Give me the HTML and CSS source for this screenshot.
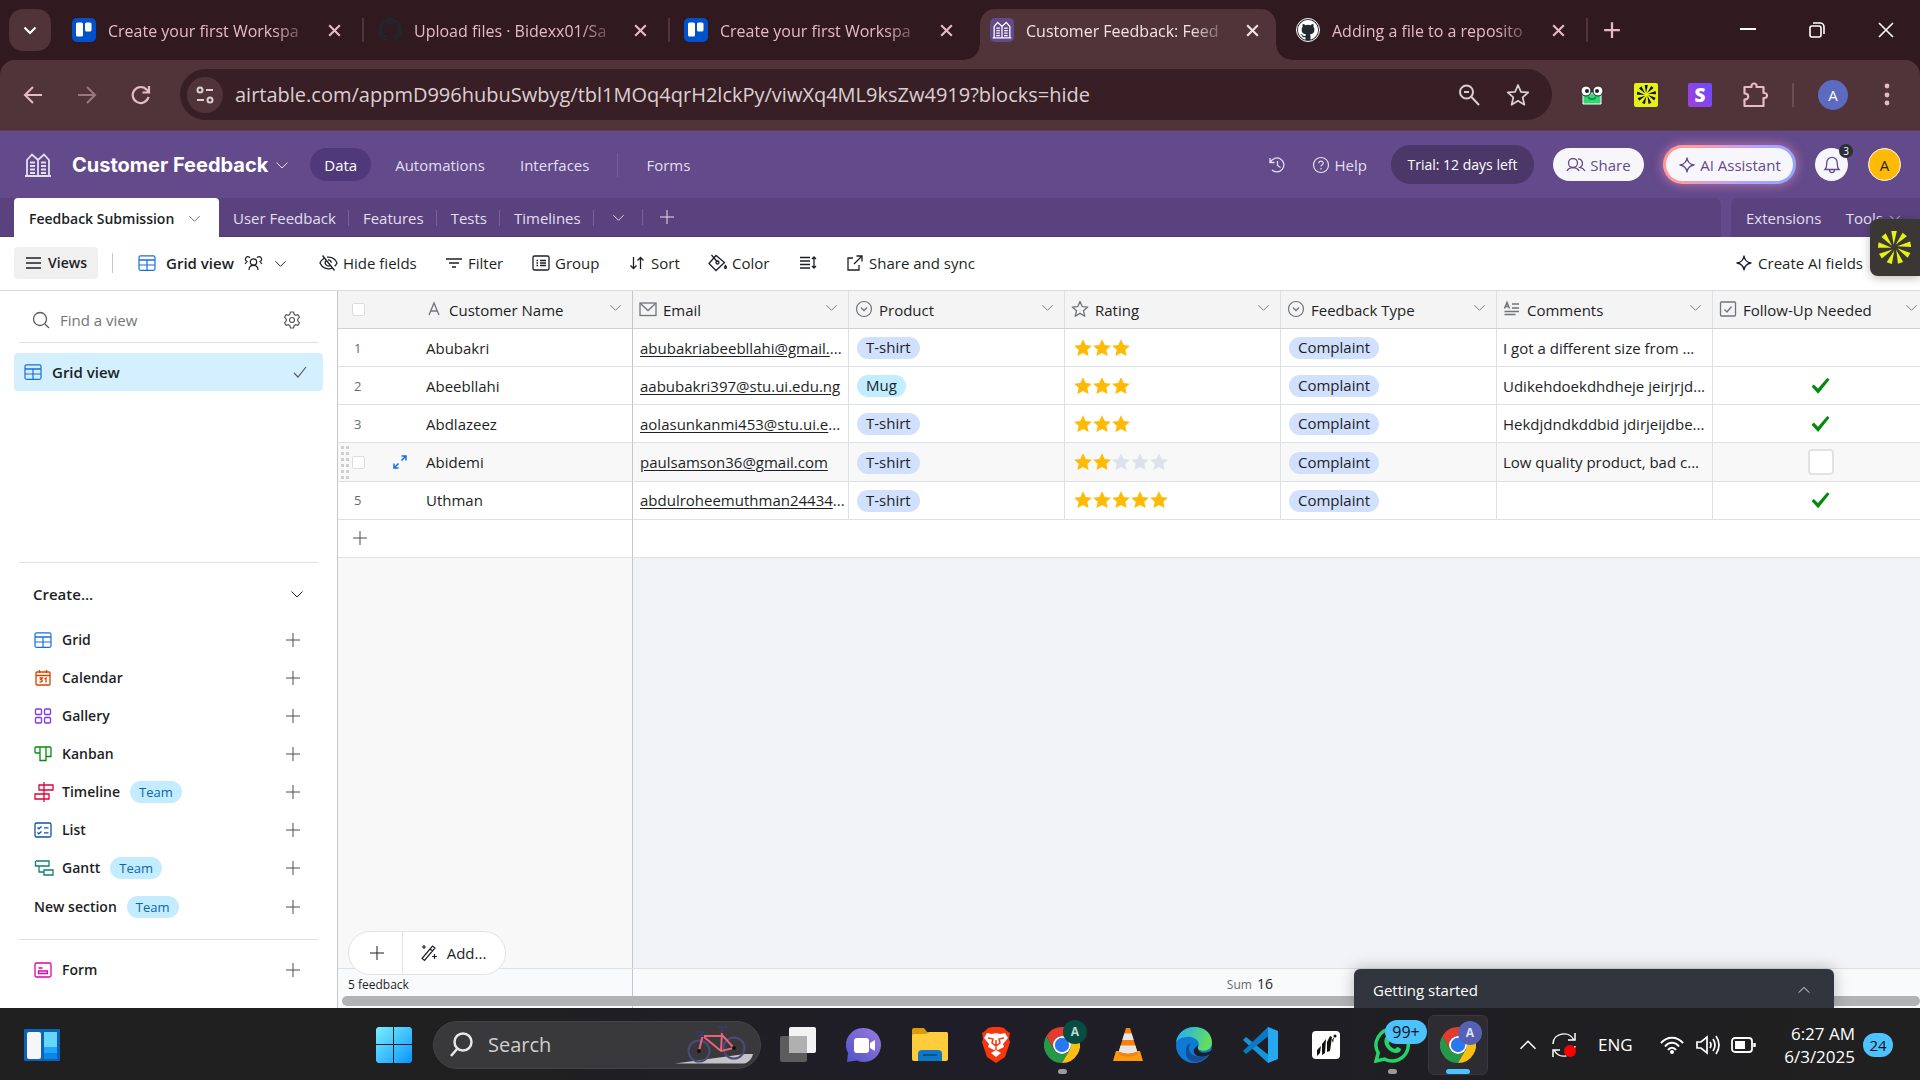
FILE: index.html
```html
<!DOCTYPE html>
<html lang="en">
<head>
<meta charset="utf-8">
<title>Customer Feedback: Feedback Submission</title>
<link rel="stylesheet" href="styles.css">
</head>
<body>
<svg class="sprite" aria-hidden="true">
  <symbol id="chev" viewBox="0 0 16 16"><path d="M2.500 5.500 8 11l5.500-5.500" fill="none" stroke="currentColor"/></symbol>
  <symbol id="chev-up" viewBox="0 0 16 16"><path d="M2 11 8 5l6 6" fill="none" stroke="currentColor"/></symbol>
  <symbol id="x" viewBox="0 0 16 16"><path d="m3 3 10 10M13 3 3 13" fill="none" stroke="currentColor"/></symbol>
  <symbol id="plus" viewBox="0 0 16 16"><path d="M8 1v14M1 8h14" fill="none" stroke="currentColor"/></symbol>
  <symbol id="trello" viewBox="0 0 24 24"><rect width="24" height="24" rx="5" fill="#0052cc"/><rect x="4" y="4.500" width="7" height="14" rx="1.500" fill="#fff"/><rect x="13" y="4.500" width="6.500" height="9" rx="1.500" fill="#fff"/></symbol>
  <symbol id="github" viewBox="0 0 16 16"><path fill="currentColor" d="M8 0C3.580 0 0 3.580 0 8c0 3.540 2.290 6.530 5.470 7.590.4.070.55-.17.55-.38 0-.19-.01-.82-.01-1.490-2.010.37-2.530-.49-2.690-.94-.09-.23-.48-.94-.82-1.130-.28-.15-.68-.52-.01-.53.63-.01 1.080.58 1.230.82.72 1.210 1.870.87 2.330.66.07-.52.28-.87.51-1.070-1.780-.2-3.640-.89-3.640-3.950 0-.87.31-1.590.82-2.150-.08-.2-.36-1.020.08-2.120 0 0 .67-.21 2.200.82a7.600 7.600 0 0 1 4 0c1.530-1.040 2.200-.82 2.200-.82.44 1.100.16 1.920.08 2.120.51.56.82 1.270.82 2.150 0 3.070-1.870 3.750-3.650 3.950.29.25.54.73.54 1.480 0 1.070-.01 1.930-.01 2.200 0 .21.15.46.55.38A8 8 0 0 0 8 0Z"/></symbol>
  <symbol id="base" viewBox="0 0 28 24"><path d="M1 23h26M3 23V7l5-5.500L14 7l6-5.500L25 7v16M14 7v16M6 9.500h5M6 13h5M6 16.500h5M6 20h5M17 9.500h5M17 13h5M17 16.500h5M17 20h5" fill="none" stroke="currentColor" stroke-width="1.800"/></symbol>
  <symbol id="grid" viewBox="0 0 18 18"><path d="M1 6h16" stroke="currentColor" stroke-width="1.500"/><path d="M2.500 1.800h13A1.500 1.500 0 0 1 17 3v12a1.500 1.500 0 0 1-1.500 1.300h-13A1.500 1.500 0 0 1 1 15V3a1.500 1.500 0 0 1 1.500-1.200ZM1 11h16M9 6v10" fill="none" stroke="currentColor" stroke-width="1.200"/></symbol>
  <symbol id="star" viewBox="0 0 16 16"><path d="m8 .3 2.400 5 5.500.6-4.100 3.700 1.200 5.600L8 12.500l-5 2.700 1.200-5.600L.1 5.900l5.500-.6z" fill="currentColor"/></symbol>
  <symbol id="star-o" viewBox="0 0 18 18"><path d="m9 1.500 2.200 5.100 5.500.5-4.200 3.700 1.300 5.500L9 13.400l-4.800 2.900 1.300-5.500L1.300 7.100l5.500-.5z" fill="none" stroke="currentColor" stroke-width="1.300" stroke-linejoin="round"/></symbol>
  <symbol id="select" viewBox="0 0 18 18"><circle cx="9" cy="9" r="7.500" fill="none" stroke="currentColor" stroke-width="1.200"/><path d="m6 7.500 3 3 3-3" fill="none" stroke="currentColor" stroke-width="1.300"/></symbol>
  <symbol id="sparkle" viewBox="0 0 18 18"><path d="M9 2c.7 4.500 2.500 6.300 7 7-4.500.7-6.300 2.500-7 7-.7-4.500-2.500-6.300-7-7 4.500-.7 6.300-2.500 7-7Z" fill="none" stroke="currentColor" stroke-width="1.300" stroke-linejoin="round"/></symbol>
  <symbol id="burst" viewBox="-12 -12 24 24"><g fill="currentColor"><path d="M-.6-2-2.300-12h4z"/><path d="M-.6-2-2.300-12h4z" transform="rotate(40)"/><path d="M-.6-2-2.300-12h4z" transform="rotate(80)"/><path d="M-.6-2-2.300-12h4z" transform="rotate(120)"/><path d="M-.6-2-2.300-12h4z" transform="rotate(160)"/><path d="M-.6-2-2.300-12h4z" transform="rotate(200)"/><path d="M-.6-2-2.300-12h4z" transform="rotate(240)"/><path d="M-.6-2-2.300-12h4z" transform="rotate(280)"/><path d="M-.6-2-2.300-12h4z" transform="rotate(320)"/></g></symbol>
  <symbol id="chrome" viewBox="-18 -18 36 36"><path d="M-15.600-9A18 18 0 0 1 15.600-9L0-9A9 9 0 0 0-7.800 4.500Z" fill="#e33b2e"/><path d="M-15.600-9A18 18 0 0 0 0 18L7.800 4.500A9 9 0 0 1-7.800 4.500Z" fill="#279847"/><path d="M15.600-9A18 18 0 0 1 0 18L7.800 4.500A9 9 0 0 0 0-9Z" fill="#fbbf14"/><circle r="9" fill="#fff"/><circle r="7.200" fill="#2a78f0"/></symbol>
</svg>

<header class="browser">
  <div class="strip">
    <button class="tab-search" aria-label="Search tabs"><svg width="16" height="16" stroke-width="2"><use href="#chev"/></svg></button>
    <div class="btab"><svg width="24" height="24"><use href="#trello"/></svg><span class="btitle">Create your first Workspa</span><button class="close" aria-label="Close tab"><svg width="17" height="17"><use href="#x"/></svg></button></div>
    <div class="btab"><svg class="dark" width="24" height="24"><use href="#github"/></svg><span class="btitle">Upload files · Bidexx01/Sa</span><button class="close" aria-label="Close tab"><svg width="17" height="17"><use href="#x"/></svg></button></div>
    <div class="btab no-sep"><svg width="24" height="24"><use href="#trello"/></svg><span class="btitle">Create your first Workspa</span><button class="close" aria-label="Close tab"><svg width="17" height="17"><use href="#x"/></svg></button></div>
    <div class="btab current"><span class="fav"><svg width="20" height="18"><use href="#base"/></svg></span><span class="btitle">Customer Feedback: Feed</span><button class="close" aria-label="Close tab"><svg width="17" height="17"><use href="#x"/></svg></button></div>
    <div class="btab"><span class="gh"><svg width="24" height="24"><use href="#github"/></svg></span><span class="btitle">Adding a file to a reposito</span><button class="close" aria-label="Close tab"><svg width="17" height="17"><use href="#x"/></svg></button></div>
    <button class="new-tab" aria-label="New tab"><svg width="18" height="18" stroke-width="2"><use href="#plus"/></svg></button>
    <div class="win">
      <button aria-label="Minimize"><svg width="16" height="16"><path d="M0 7h16" stroke="currentColor" stroke-width="2"/></svg></button>
      <button aria-label="Restore"><svg width="16" height="16" fill="none" stroke="currentColor" stroke-width="1.600"><rect x="1" y="4" width="11" height="11" rx="2"/><path d="M4 1h7a4 4 0 0 1 4 4v7"/></svg></button>
      <button aria-label="Close window"><svg width="16" height="16"><path d="m1 1 14 14M15 1 1 15" stroke="currentColor" stroke-width="1.600"/></svg></button>
    </div>
  </div>
  <div class="urlrow">
    <div class="nav">
      <button aria-label="Back"><svg width="20" height="20" fill="none" stroke="currentColor" stroke-width="2"><path d="M19 10H2M10 2l-8 8 8 8"/></svg></button>
      <button class="off" aria-label="Forward"><svg width="20" height="20" fill="none" stroke="currentColor" stroke-width="2"><path d="M1 10h17M10 2l8 8-8 8"/></svg></button>
      <button aria-label="Reload"><svg width="20" height="20" fill="none" stroke="currentColor" stroke-width="2.200"><path d="M17.500 12A8 8 0 1 1 16 5l2 2M18 1v6.500h-6.500"/></svg></button>
    </div>
    <div class="omni">
      <button class="site" aria-label="Site information"><svg width="20" height="20" fill="none" stroke="currentColor" stroke-width="2"><circle cx="5" cy="5" r="2.500"/><path d="M11 5h7M2 15h7"/><circle cx="15" cy="15" r="2.500"/></svg></button>
      <input class="url" type="text" aria-label="Address" value="airtable.com/appmD996hubuSwbyg/tbl1MOq4qrH2lckPy/viwXq4ML9ksZw4919?blocks=hide">
      <button aria-label="Zoom"><svg width="22" height="22" fill="none" stroke="currentColor" stroke-width="2"><circle cx="8.500" cy="8" r="6.500"/><path d="m13.500 13 7.500 8M6 8h5"/></svg></button>
      <button aria-label="Bookmark"><svg width="24" height="24"><use href="#star-o"/></svg></button>
    </div>
    <div class="ext">
      <button aria-label="Frog extension"><svg width="24" height="20"><path d="M3 8h18v11H3z" fill="#2fd873" stroke="#fff"/><path d="M8 12c2 3 6 3 8 0" fill="none" stroke="#184" stroke-width="1.500"/><circle cx="6" cy="6" r="5" fill="#fff" stroke="#222"/><circle cx="18" cy="6" r="5" fill="#fff" stroke="#222"/><circle cx="7" cy="6" r="2" fill="#222"/><circle cx="17" cy="6" r="2" fill="#222"/></svg></button>
      <button class="burst-btn" aria-label="Burst extension"><svg width="19" height="19"><use href="#burst"/></svg></button>
      <button class="s-btn" aria-label="S extension">S</button>
      <button aria-label="Extensions menu"><svg width="26" height="26" fill="none" stroke="currentColor" stroke-width="2.200"><path d="M2.500 5H9.500V4a2.500 2.500 0 0 1 5 0v1h7v6h1a2.500 2.500 0 0 1 0 5h-1v8h-19v-6.500c5 0 5-6 0-6z" stroke-linejoin="round"/></svg></button>
      <span class="bar"></span>
      <button class="profile" aria-label="Profile">A</button>
      <button aria-label="Chrome menu"><svg width="6" height="24" fill="currentColor"><circle cx="3" cy="3" r="2.400"/><circle cx="3" cy="12" r="2.400"/><circle cx="3" cy="20" r="2.400"/></svg></button>
    </div>
  </div>
</header>

<div class="apphead">
  <svg class="logo" width="28" height="24"><use href="#base"/></svg>
  <h1>Customer Feedback</h1>
  <svg class="chv" width="16" height="16"><use href="#chev"/></svg>
  <nav class="mainnav">
    <a class="on" href="#data">Data</a><a href="#auto">Automations</a><a href="#int">Interfaces</a><span class="bar"></span><a href="#forms">Forms</a>
  </nav>
  <div class="actions">
    <button class="history" aria-label="History"><svg width="18" height="18" fill="none" stroke="currentColor" stroke-width="1.300"><path d="M2.500 6A7 7 0 1 1 4 14M2 2v4.500h4.500M9.500 5v4.500l3 2"/></svg></button>
    <button class="help"><svg width="18" height="18" fill="none" stroke="currentColor" stroke-width="1.200"><circle cx="9" cy="9" r="7.500"/><path d="M6.800 7.200c0-3 4.600-2.700 4.400 0-.1 1.500-2.200 1.500-2.200 3.300M9 12v1.500"/></svg>Help</button>
    <button class="trial">Trial: 12 days left</button>
    <button class="pill share"><svg width="20" height="18" fill="none" stroke="currentColor" stroke-width="1.300"><circle cx="7" cy="7" r="4.500"/><path d="M1 15c2-4.500 10-4.500 12 0M12 2.800a4.500 4.500 0 0 1 2 8.500c2 .4 4 1.700 5 3.700"/></svg>Share</button>
    <button class="pill ai"><svg width="18" height="18"><use href="#sparkle"/></svg>AI Assistant</button>
    <button class="bell" aria-label="Notifications"><svg width="18" height="20" fill="none" stroke="currentColor" stroke-width="1.300"><path d="M2 14.500c2-2 1.500-4 1.800-7a5.200 5.200 0 0 1 10.400 0c.3 3-.2 5 1.800 7zM6.500 15c.5 3.500 4.500 3.500 5 0"/></svg><span class="count">3</span></button>
    <button class="me" aria-label="Account">A</button>
  </div>
</div>

<div class="tables">
  <div class="tabs">
    <a class="ttab active" href="#fs">Feedback Submission<svg width="15" height="15"><use href="#chev"/></svg></a>
    <a class="ttab" href="#uf">User Feedback</a><a class="ttab" href="#f">Features</a><a class="ttab" href="#t">Tests</a><a class="ttab" href="#tl">Timelines</a>
    <button class="more" aria-label="More tables"><svg width="15" height="15"><use href="#chev"/></svg></button>
    <button class="addt" aria-label="Add table"><svg width="16" height="16"><use href="#plus"/></svg></button>
  </div>
  <div class="side-tabs"><button>Extensions</button><button>Tools<svg width="14" height="14"><use href="#chev"/></svg></button></div>
  <button class="float" aria-label="Open assistant"><svg width="33" height="33"><use href="#burst"/></svg></button>
</div>

<div class="viewbar">
  <button class="views"><svg width="17" height="14" stroke="currentColor" stroke-width="1.400"><path d="M1 2h15M1 7h15M1 12h15"/></svg>Views</button>
  <span class="bar"></span>
  <button class="gridview"><svg class="blue" width="18" height="18"><use href="#grid"/></svg><span>Grid view</span><svg width="19" height="18" fill="none" stroke="currentColor" stroke-width="1.200"><circle cx="9.500" cy="8" r="3.200"/><path d="M5 16c0-6.300 9-6.300 9 0M6 3.800A2.500 2.500 0 1 0 3 7.500L1 10M13 3.800a2.500 2.500 0 1 1 3 3.700l2 2.500"/></svg><svg width="15" height="15"><use href="#chev"/></svg></button>
  <button class="tool t1"><svg width="19" height="18" fill="none" stroke="currentColor" stroke-width="1.300"><path d="m3.500 1.500 12 15M5.500 4C3 5.500 1.500 7.500 1 9c2 5 7.500 7 12.500 5M8 3.200c5-.6 8.500 2.300 10 5.800-.5 1-1.300 2.300-2.300 3.200M6.800 6.800a3.300 3.300 0 0 0 4.400 4.700M9 5.800a3.300 3.300 0 0 1 3.300 3"/></svg>Hide fields</button>
  <button class="tool t2"><svg width="18" height="18" fill="none" stroke="currentColor" stroke-width="1.400"><path d="M1 5h16M4 9h10M7 13h4"/></svg>Filter</button>
  <button class="tool t3"><svg width="18" height="18" fill="none" stroke="currentColor" stroke-width="1.300"><rect x="1" y="2" width="16" height="14" rx="1.500"/><path d="M4.500 6.500H6M4.500 9H6M4.500 11.500H6M8 6.500h6M8 9h6M8 11.500h6"/></svg>Group</button>
  <button class="tool t4"><svg width="16" height="18" fill="none" stroke="currentColor" stroke-width="1.300"><path d="M4.500 3v11M1.500 11.500l3 3 3-3M11.500 15V4M8.500 6.500l3-3 3 3"/></svg>Sort</button>
  <button class="tool t5"><svg width="20" height="18" fill="none" stroke="currentColor" stroke-width="1.300"><path d="M8 1.500 1 9.500l7 7 8.500-8zM3.500 1l6 7"/><circle cx="9.500" cy="8.500" r="1.500"/><path d="M17.500 11.500c3 4-3 4 0 0Z"/></svg>Color</button>
  <button class="tool t6" aria-label="Row height"><svg width="18" height="18" fill="none" stroke="currentColor" stroke-width="1.300"><path d="M1 3.500h10M1 7h10M1 10.500h10M1 14h10M15 3v11M13 5l2-2 2 2M13 12l2 2 2-2"/></svg></button>
  <button class="tool t7"><svg width="16" height="18" fill="none" stroke="currentColor" stroke-width="1.300"><path d="M6 4H1v12h11v-5M9.500 2H15v5.500M15 2 7 10"/></svg>Share and sync</button>
  <button class="tool aif"><svg width="18" height="18"><use href="#sparkle"/></svg>Create AI fields</button>
</div>

<main class="work">
  <aside class="sidebar">
    <div class="find">
      <svg width="18" height="18" fill="none" stroke="currentColor" stroke-width="1.300"><circle cx="8" cy="8" r="6.500"/><path d="m13 13 4 4"/></svg>
      <input type="text" placeholder="Find a view" aria-label="Find a view">
      <button aria-label="View settings"><svg width="18" height="18" fill="none" stroke="currentColor" stroke-width="1.200"><circle cx="9" cy="9" r="2.500"/><path d="M6.800 3.500 7.500 1h3l.7 2.500 1.300.8 2.500-.6 1.500 2.500-1.800 1.900v1.800l1.800 1.900-1.500 2.500-2.500-.6-1.300.8-.7 2.500h-3l-.7-2.500-1.300-.8-2.500.6-1.500-2.500 1.800-1.900V8.100L1.500 6.200 3 3.700l2.500.6z" stroke-linejoin="round"/></svg></button>
    </div>
    <a class="vrow" href="#grid-view"><svg class="blue" width="18" height="18"><use href="#grid"/></svg>Grid view<svg class="vcheck" width="14" height="14" fill="none" stroke="currentColor" stroke-width="1.200"><path d="m1 8 4 4 8-10"/></svg></a>
    <div class="create">
      <button class="chead">Create...<svg width="16" height="16"><use href="#chev"/></svg></button>
      <button class="crow"><svg class="blue" width="18" height="18"><use href="#grid"/></svg>Grid<svg class="plus" width="16" height="16"><use href="#plus"/></svg></button>
      <button class="crow"><svg width="18" height="18" fill="none" stroke="#d54401" stroke-width="1.300"><rect x="2" y="3" width="14" height="13" rx="1"/><path d="M2 6.500h14M5.500 1v3M12.500 1v3M5.500 9h2.800l-1.500 1.700c2.500 0 1.800 3-1.300 2.200M10.500 10l1.500-1v4.500"/></svg>Calendar<svg class="plus" width="16" height="16"><use href="#plus"/></svg></button>
      <button class="crow"><svg width="18" height="18" fill="none" stroke="#7c37ef" stroke-width="1.300"><rect x="1.500" y="2" width="6" height="5.500" rx="1"/><rect x="10.500" y="2" width="6" height="5.500" rx="1"/><rect x="1.500" y="10.500" width="6" height="5.500" rx="1"/><rect x="10.500" y="10.500" width="6" height="5.500" rx="1"/></svg>Gallery<svg class="plus" width="16" height="16"><use href="#plus"/></svg></button>
      <button class="crow"><svg width="18" height="18" fill="none" stroke="#048a0e" stroke-width="1.300"><path d="M2 2h14a1 1 0 0 1 1 1v8.500h-5M6 8H2a1 1 0 0 1-1-1V3a1 1 0 0 1 1-1M6 2v13.500h6V2"/></svg>Kanban<svg class="plus" width="16" height="16"><use href="#plus"/></svg></button>
      <button class="crow"><svg width="20" height="20" fill="none" stroke="#dc043b" stroke-width="1.300"><path d="M10 0v20M5 3h14v5H5zM1 12h14v5H1z"/></svg>Timeline<span class="team">Team</span><svg class="plus" width="16" height="16"><use href="#plus"/></svg></button>
      <button class="crow"><svg width="18" height="18" fill="none" stroke="#0d52ac" stroke-width="1.300"><rect x="1" y="2" width="16" height="14" rx="1.500"/><path d="m3.500 6.500 1.300 1.300L7.500 5.500M3.500 11.500l1.300 1.300 2.700-2.300M10 6.800h4.500M10 11.800h4.500"/></svg>List<svg class="plus" width="16" height="16"><use href="#plus"/></svg></button>
      <button class="crow"><svg width="20" height="18" fill="none" stroke="#0f7f78" stroke-width="1.300"><path d="M2 2h13v5H1.500V2M5 7v6h5M10 11h9v5h-9z"/></svg>Gantt<span class="team">Team</span><svg class="plus" width="16" height="16"><use href="#plus"/></svg></button>
      <button class="crow section">New section<span class="team">Team</span><svg class="plus" width="16" height="16"><use href="#plus"/></svg></button>
      <button class="crow form"><svg width="18" height="18" fill="none" stroke="#dd04a8" stroke-width="1.300"><rect x="1" y="2" width="16" height="14" rx="1.500"/><path d="M4.500 7h4M4.500 10h9v2.500h-9z"/></svg>Form<svg class="plus" width="16" height="16"><use href="#plus"/></svg></button>
    </div>
  </aside>

  <section class="gridpane">
    <table>
      <colgroup><col class="c-num"><col class="c"><col class="c"><col class="c"><col class="c"><col class="c"><col class="c"><col class="c"></colgroup>
      <thead><tr>
        <th class="num"><input type="checkbox" class="box" aria-label="Select all"></th>
        <th class="frozen"><div class="h"><svg width="18" height="18" fill="none" stroke="currentColor" stroke-width="1.300"><path d="m4 15 5-12 5 12M5.700 11h6.600"/></svg>Customer Name<svg class="hc" width="15" height="15"><use href="#chev"/></svg></div></th>
        <th><div class="h"><svg width="18" height="18" fill="none" stroke="currentColor" stroke-width="1.300"><rect x="1" y="3" width="16" height="12.500"/><path d="m1.500 3.500 7.500 7 7.500-7"/></svg>Email<svg class="hc" width="15" height="15"><use href="#chev"/></svg></div></th>
        <th><div class="h"><svg width="18" height="18"><use href="#select"/></svg>Product<svg class="hc" width="15" height="15"><use href="#chev"/></svg></div></th>
        <th><div class="h"><svg width="18" height="18"><use href="#star-o"/></svg>Rating<svg class="hc" width="15" height="15"><use href="#chev"/></svg></div></th>
        <th><div class="h"><svg width="18" height="18"><use href="#select"/></svg>Feedback Type<svg class="hc" width="15" height="15"><use href="#chev"/></svg></div></th>
        <th><div class="h"><svg width="18" height="18" fill="none" stroke="currentColor" stroke-width="1.500"><path d="m1.500 8.500 2.500-6 2.500 6M2.500 6.500h3M9 4h7M9 8h7M1.500 11.500H16M1.500 14.500h11"/></svg>Comments<svg class="hc" width="15" height="15"><use href="#chev"/></svg></div></th>
        <th><div class="h"><svg width="18" height="18" fill="none" stroke="currentColor" stroke-width="1.300"><rect x="1.500" y="2" width="15" height="14" rx="1"/><path d="m5.500 9.500 2.500 2.500 4.500-5.500"/></svg>Follow-Up Needed<svg class="hc" width="15" height="15"><use href="#chev"/></svg></div></th>
      </tr></thead>
      <tbody>
        <tr><td class="num">1</td><td class="frozen">Abubakri</td><td class="mail"><a href="#m1">abubakriabeebllahi@gmail.</a>...</td><td><span class="tag">T-shirt</span></td><td class="rate"><svg><use href="#star"/></svg><svg><use href="#star"/></svg><svg><use href="#star"/></svg></td><td><span class="tag">Complaint</span></td><td>I got a different size from ...</td><td class="fu"><input type="checkbox" aria-label="Follow-up for Abubakri"></td></tr>
        <tr><td class="num">2</td><td class="frozen">Abeebllahi</td><td class="mail"><a href="#m2">aabubakri397@stu.ui.edu.ng</a></td><td><span class="tag cyan">Mug</span></td><td class="rate"><svg><use href="#star"/></svg><svg><use href="#star"/></svg><svg><use href="#star"/></svg></td><td><span class="tag">Complaint</span></td><td>Udikehdoekdhdheje jeirjrjd...</td><td class="fu"><input type="checkbox" checked aria-label="Follow-up for Abeebllahi"></td></tr>
        <tr><td class="num">3</td><td class="frozen">Abdlazeez</td><td class="mail"><a href="#m3">aolasunkanmi453@stu.ui.e</a>...</td><td><span class="tag">T-shirt</span></td><td class="rate"><svg><use href="#star"/></svg><svg><use href="#star"/></svg><svg><use href="#star"/></svg></td><td><span class="tag">Complaint</span></td><td>Hekdjdndkddbid jdirjeijdbe...</td><td class="fu"><input type="checkbox" checked aria-label="Follow-up for Abdlazeez"></td></tr>
        <tr class="hover"><td class="num"><div class="rowctl"><svg width="8" height="36" fill="#cfcfcf"><path d="M0 2h3v3H0zM5 2h3v3H5zM0 8h3v3H0zM5 8h3v3H5zM0 14h3v3H0zM5 14h3v3H5zM0 20h3v3H0zM5 20h3v3H5zM0 26h3v3H0zM5 26h3v3H5zM0 32h3v3H0zM5 32h3v3H5z"/></svg><input type="checkbox" class="box" aria-label="Select row 4"><button class="expand" aria-label="Expand record"><svg width="14" height="14" fill="none" stroke="currentColor" stroke-width="1.500"><path d="M8.500 1H13v4.500M13 1 8.500 5.500M5.500 13H1V8.500M1 13l4.500-4.500"/></svg></button></div></td><td class="frozen">Abidemi</td><td class="mail"><a href="#m4">paulsamson36@gmail.com</a></td><td><span class="tag">T-shirt</span></td><td class="rate"><svg><use href="#star"/></svg><svg><use href="#star"/></svg><svg class="no"><use href="#star"/></svg><svg class="no"><use href="#star"/></svg><svg class="no"><use href="#star"/></svg></td><td><span class="tag">Complaint</span></td><td>Low quality product, bad c...</td><td class="fu"><input type="checkbox" aria-label="Follow-up for Abidemi"></td></tr>
        <tr><td class="num">5</td><td class="frozen">Uthman</td><td class="mail"><a href="#m5">abdulroheemuthman24434</a>...</td><td><span class="tag">T-shirt</span></td><td class="rate"><svg><use href="#star"/></svg><svg><use href="#star"/></svg><svg><use href="#star"/></svg><svg><use href="#star"/></svg><svg><use href="#star"/></svg></td><td><span class="tag">Complaint</span></td><td></td><td class="fu"><input type="checkbox" checked aria-label="Follow-up for Uthman"></td></tr>
        <tr class="addrow"><td class="num"><button aria-label="Add record"><svg width="16" height="16"><use href="#plus"/></svg></button></td><td class="frozen"></td><td colspan="6"></td></tr>
      </tbody>
    </table>
    <div class="filler"><div class="fleft"></div></div>
    <div class="addpill"><button aria-label="Add record"><svg width="16" height="16"><use href="#plus"/></svg></button><button class="addmore"><svg width="18" height="18" fill="none" stroke="currentColor" stroke-width="1.200"><path d="M2 14.500 12.500 2l2.500 2L4.500 16.500zM4 1v4M2 3h4M14.500 10v5M12 12.500h5M10 5l2.500 2"/></svg>Add...</button></div>
    <footer class="summary">
      <div class="sleft">5 feedback</div>
      <div class="sum">Sum <b>16</b></div>
      <div class="scroll"></div>
    </footer>
    <button class="getting">Getting started<svg width="14" height="14"><use href="#chev-up"/></svg></button>
  </section>
</main>

<footer class="taskbar">
  <button class="widgets" aria-label="Widgets"><svg width="36" height="32"><rect width="36" height="32" rx="1" fill="#0b62b8"/><rect x="3" y="3" width="14" height="27" rx="2" fill="#f6f6f6"/><path d="M20 3h13v15H20z" fill="#66d6ff"/><path d="M20 18h13v6H20z" fill="#1fa5fb"/><path d="M20 24h13v6H20z" fill="#0a86e8"/></svg></button>
  <div class="apps">
    <button class="start" aria-label="Start"><svg width="36" height="36"><defs><linearGradient id="w" x1="0" y1="0" x2="1" y2="1"><stop offset="0" stop-color="#79f0ff"/><stop offset="1" stop-color="#0a94ff"/></linearGradient></defs><path d="M2 0h15v17H0V2zM18 0h16l2 2v15H18zM0 18h17v18H2l-2-2zM18 18h18v16l-2 2H18z" fill="url(#w)"/></svg></button>
    <label class="search"><svg width="24" height="26" fill="none" stroke="#e8e8e8" stroke-width="2.500"><circle cx="13" cy="10" r="8.500"/><path d="m7 17-6 7"/></svg><input type="text" placeholder="Search" aria-label="Search"><svg width="80" height="40" fill="none"><path d="M0 38.500 70 29h8c-1 5-5 9-9 9.500z" fill="#c4c4c6"/><circle cx="24" cy="26" r="10.500" stroke="#4b4a7c" stroke-width="2"/><circle cx="59" cy="23" r="10.500" stroke="#4b4a7c" stroke-width="2"/><path d="m24 26 4-17M29 12l17 14 13-3L48 11H29M46 26l1-19" stroke="#e5647c" stroke-width="2"/><path d="M20 7h8v4h-6M43 2h9M47 2v6" stroke="#3a3960" stroke-width="2"/><circle cx="24" cy="26" r="2" fill="#111"/><circle cx="59" cy="23" r="2" fill="#111"/></svg></label>
    <button class="app" aria-label="Task view"><svg width="36" height="36"><rect x="0" y="9" width="27" height="26" rx="2" fill="#5c5c5c"/><rect x="9" width="27" height="26" rx="2" fill="#f3f3f3"/><path d="M9 9h18v17H9z" fill="#b0b0b0"/></svg></button>
    <button class="app" aria-label="Chat"><svg width="36" height="36"><defs><linearGradient id="t" x1="1" y1="0" x2="0" y2="1"><stop offset="0" stop-color="#9a7be0"/><stop offset="1" stop-color="#4f52c8"/></linearGradient></defs><path d="M18 1a17 17 0 1 1-7 32.500L1 35l1-9A17 17 0 0 1 18 1" fill="url(#t)"/><rect x="8" y="11" width="15" height="15" rx="3" fill="#fff"/><path d="m24 16 5-3v11l-5-3z" fill="#fff"/></svg></button>
    <button class="app" aria-label="File Explorer"><svg width="36" height="36"><path d="M0 3q0-2 2-2h10l3 4h19q2 0 2 2v8H0z" fill="#dd9a08"/><path d="M0 9q0-2 2-2h12l4-2h16q2 0 2 2v25q0 2-2 2H2q-2 0-2-2z" fill="#ffcd3c"/><path d="M6 34V27q0-4 4-4h16q4 0 4 4v7z" fill="#0f78c4"/><path d="M11 28h14" stroke="#07508e" stroke-width="2"/></svg></button>
    <button class="app" aria-label="Brave"><svg width="36" height="36"><path d="m10 1 4-1h8l4 1 3 3 3 2-1 6 1 3-5 15-9 6-9-6L4 15l1-3-1-6 3-2z" fill="#f8370c"/><path d="m18 6 4 1 5-1 3 5-5 6 1 3-6 3-2-1-2 1-6-3 1-3-5-6 3-5 5 1z" fill="#fff"/><path d="m18 23 5 3-5 4-5-4z" fill="#fff"/><path d="m10 11 5 1-1 4 4 3 4-3-1-4 5-1M18 13v9" fill="none" stroke="#f8370c" stroke-width="1.500"/></svg></button>
    <button class="app run" aria-label="Chrome"><svg width="36" height="36"><use href="#chrome"/></svg><span class="av green">A</span></button>
    <button class="app" aria-label="VLC"><svg width="36" height="36"><path d="M6 24h24l3 10H3z" fill="#ff9a10"/><path d="M16 1h4l8 26q-10 6-20 0z" fill="#f38213"/><path d="M14.300 6.500h7.400l2 6.500h-11.400zM10.600 18.500h14.800l1.800 6q-9 4-18.400 0z" fill="#e6e6e6"/></svg></button>
    <button class="app" aria-label="Edge"><svg width="36" height="36"><defs><linearGradient id="e" x1="0" y1="0" x2="1" y2=".3"><stop offset=".2" stop-color="#2eb3e4"/><stop offset="1" stop-color="#62df5c"/></linearGradient></defs><circle cx="18" cy="18" r="18" fill="#0f7ad6"/><path d="M0 16C2-5 35-5 36 15c0 8-7 10-12 8-3-1-2-3-1-5 0-5-6-9-12-8-6 0-10 3-11 6" fill="url(#e)"/><path d="M15 16c-6 9 3 18 18 11-8 12-25 10-23-4 0-4 2-6 5-7" fill="#164e96"/><path d="M22 18c-2 8 7 10 14 5l0 3c-9 6-20 4-18-4z" fill="#1f1e28"/></svg></button>
    <button class="app" aria-label="VS Code"><svg width="36" height="36"><path d="m1 13 3-3L29 30l-3 6z" fill="#1595dd"/><path d="m1 24 3 3L29 7l-3-7z" fill="#0c78c3"/><path d="m26 0 10 4v28l-10 4z" fill="#29a8f2"/></svg></button>
    <button class="app" aria-label="Trading app"><svg width="36" height="36"><rect x="4" y="4" width="28" height="28" rx="4" fill="#fff"/><path d="m9 23 4-4-1 7-3 3zM14 17l4-5-1 14-3 2zM19 15l3-6 2 1-2 14-3 1zM24 13l2-3-1 6z" fill="#111"/><circle cx="27" cy="9" r="1.500" fill="#111"/></svg></button>
    <button class="app run" aria-label="WhatsApp"><svg width="36" height="36" fill="none"><path d="M18 2a16 16 0 1 1-7.500 30L2 34l2.200-8A16 16 0 0 1 18 2Z" stroke="#25d366" stroke-width="3.500"/><path d="M11 11c2-3 4-1 5 3 0 1-2 2-1 3q2 4 6 5l2-2q2 0 4 2c0 4-5 5-9 3-6-3-9-9-7-14" fill="#25d366"/></svg><span class="unread">99+</span></button>
    <button class="app focus" aria-label="Chrome, active"><svg width="36" height="36"><use href="#chrome"/></svg><span class="av">A</span></button>
  </div>
  <div class="tray">
    <button aria-label="Hidden icons"><svg width="20" height="20" stroke-width="1.200"><use href="#chev-up"/></svg></button>
    <button class="sync" aria-label="Update"><svg width="26" height="26" fill="none" stroke="currentColor" stroke-width="1.500"><path d="M2 12C2 1 18-2 23 8M24 1v7h-7M24 14c-1 11-16 14-21 4M2 25v-7h7"/><circle cx="19" cy="19" r="6" fill="#f00" stroke="none"/></svg></button>
    <span class="lang">ENG</span>
    <button class="net" aria-label="Network and sound"><svg width="26" height="20" fill="none" stroke="currentColor" stroke-width="2"><path d="M2 8c6-7 16-7 22 0M6 11.500c4-5 10-5 14 0M9 15c2-3 6-3 8 0"/><circle cx="13" cy="17" r="2" fill="currentColor" stroke="none"/></svg><svg width="26" height="22" fill="none" stroke="currentColor" stroke-width="1.700"><path d="M2 8h4l6-5v16l-6-5H2zM15 8q2 3 0 6M18 5q4 6 0 12M21 2q6 9 0 18"/></svg><svg width="26" height="18" fill="none" stroke="currentColor" stroke-width="1.800"><rect x="1" y="2" width="20" height="14" rx="3"/><path d="M4 5h10v8H4z" fill="currentColor" stroke="none"/><path d="M23.500 7v4" stroke-width="2.500"/></svg></button>
    <div class="clock"><span>6:27 AM</span><span>6/3/2025</span></div>
    <span class="notif">24</span>
  </div>
</footer>
</body>
</html>
```
FILE: styles.css
```css
* { box-sizing: border-box; }
body {
  margin: 0; min-height: 100vh; display: flex; flex-direction: column;
  font: 15px/20px "Open Sans", "Noto Sans", sans-serif; color: #1d1f25; background: #fff; overflow: hidden;
}
button, input { font: inherit; color: inherit; background: none; border: 0; padding: 0; margin: 0; }
button { display: flex; align-items: center; justify-content: center; white-space: nowrap; }
a { color: inherit; text-decoration: none; }
svg { display: block; flex: none; }
input { outline: 0; min-width: 0; }
.sprite { position: absolute; width: 0; height: 0; }
.blue { color: #166ee1; }

/* browser chrome */
.browser { background: #30191f; color: #e5bcc3; }
.strip { display: flex; height: 60px; padding-left: 9px; align-items: center; }
.tab-search { width: 42px; height: 42px; border-radius: 14px; background: #503439; color: #fff; margin-right: 8px; }
.btab { width: 306px; height: 51px; align-self: flex-end; display: flex; align-items: center; gap: 12px; padding: 0 18px 9px 13px; position: relative; font-size: 16px; }
.btab::after { content: ""; position: absolute; right: 1px; top: 9px; width: 2px; height: 24px; background: #503439; }
.btab.no-sep::after { display: none; }
.btitle { flex: 1; padding-top: 2px; white-space: nowrap; mask-image: linear-gradient(90deg, #000 165px, transparent 205px); }
.close { width: 26px; height: 24px; stroke-width: 2; }
.dark { color: #22262a; }
.btab.current { color: #f4e3e6; }
.btab.current::before { content: ""; position: absolute; z-index: 0; inset: 0 7px 0 3px; background: #503439; border-radius: 15px 15px 0 0; }
.btab.current > * { position: relative; z-index: 1; }
.btab.current::after { left: -12px; right: -8px; top: auto; bottom: 0; width: auto; height: 15px; background: radial-gradient(circle at 0 0, transparent 14px, #503439 15px) left / 15px 15px no-repeat, radial-gradient(circle at 100% 0, transparent 14px, #503439 15px) right / 15px 15px no-repeat; }
.fav { width: 24px; height: 24px; border-radius: 5px; background: #634a8b; display: grid; place-items: center; color: #fff; }
.gh { border-radius: 50%; background: #24292f; border: 1px solid #fff; width: 24px; height: 24px; display: grid; place-items: center; color: #fff; overflow: hidden; }
.gh svg { width: 20px; height: 20px; }
.new-tab { width: 40px; height: 40px; margin-left: 3px; }
.win { margin-left: auto; display: flex; color: #fff; }
.win button { width: 69px; height: 58px; }
.urlrow { height: 71px; background: #503439; border-radius: 15px 15px 0 0; border-bottom: 1px solid #5a4244; display: flex; align-items: center; padding-left: 6px; }
.nav { display: flex; width: 174px; }
.nav button { width: 54px; height: 40px; }
.off { opacity: .5; }
.omni { flex: 1; height: 51px; margin: 0 16px 1px 0; border-radius: 26px; background: #381f25; display: flex; align-items: center; padding: 0 10px 0 7px; color: #dccfd1; }
.site { width: 36px; height: 36px; border-radius: 50%; background: #503439; margin-right: 12px; }
.url { flex: 1; font-size: 20px; line-height: 28px; color: #dccfd1; }
.omni button:not(.site) { width: 49px; height: 40px; }
.ext { display: flex; align-items: center; gap: 30px; padding: 0 30px 1px 12px; }
.burst-btn { width: 24px; height: 24px; background: #e6f213; color: #111; border-radius: 2px; }
.s-btn { width: 24px; height: 24px; background: linear-gradient(60deg, #a040d8, #6a4cff); color: #fff; font-weight: 800; font-size: 19px; border-radius: 2px; }
.ext .bar { width: 2px; height: 24px; background: #6d4c52; margin: 0 -6px; }
.profile { width: 30px; height: 30px; border-radius: 50%; background: #5c6bc0; color: #fff; margin-right: 6px; }

/* app header */
.apphead { height: 67px; background: #634a8b; color: #e4dfee; display: flex; align-items: center; padding: 0 19px 0 24px; }
h1 { font: 700 20px/26px Inter, sans-serif; color: #fff; margin: 0 6px 0 20px; white-space: nowrap; }
.mainnav { display: flex; align-items: center; margin-left: 20px; gap: 7px; }
.mainnav a { padding: 7px 14px 6px; border-radius: 17px; }
.mainnav .on { background: #50397a; color: #fff; margin-right: 3px; }
.mainnav .bar { width: 1px; height: 24px; background: #775fa0; margin: 0 7px; }
.actions { margin-left: auto; display: flex; align-items: center; }
.history { margin-right: 26px; }
.help { gap: 5px; margin-right: 24px; }
.trial { width: 143px; height: 39px; border-radius: 20px; background: #4b3768; color: #fff; font-size: 14px; margin-right: 19px; }
.pill { height: 33px; border-radius: 17px; background: #f7f7fb; color: #634a8b; gap: 4px; }
.share { width: 91px; margin-right: 22px; }
.ai { width: 127px; gap: 4px; position: relative; margin-right: 22px; box-shadow: 0 0 10px 5px #e58fc080; isolation: isolate; }
.ai::before { content: ""; position: absolute; inset: -3px; border-radius: 20px; background: linear-gradient(120deg, #ff9a8c, #ff9aa2 25%, #b9a2ff 60%, #86a8ff); z-index: -2; }
.ai::after { content: ""; position: absolute; inset: 0; border-radius: 17px; background: #f7f7fb; z-index: -1; }
.bell { width: 33px; height: 33px; border-radius: 50%; background: #f7f7fb; color: #634a8b; position: relative; margin-right: 20px; }
.count { position: absolute; right: -5px; top: -4px; width: 14px; height: 14px; border-radius: 50%; background: #2b2f38; color: #fff; font-size: 10px; line-height: 14px; }
.me { width: 33px; height: 33px; border-radius: 50%; background: #ffba05; color: #1d1f25; border: 1px solid #fff; }

/* table tabs */
.tables { height: 39px; background: #634a8b; color: #e4dfee; display: flex; gap: 10px; position: relative; }
.tabs { flex: 1; background: #5a427e; border-radius: 0 6px 0 0; display: flex; align-items: center; padding-left: 14px; border-bottom: 1px solid #503a70; }
.ttab { padding: 2px 13px 0 14px; position: relative; white-space: nowrap; }
.ttab::after, .more::after { content: ""; position: absolute; right: 0; top: 4px; width: 1px; height: 16px; background: #775fa0; }
.active { display: flex; align-items: center; justify-content: space-between; align-self: stretch; width: 205px; margin-bottom: -1px; background: #fff; color: #1d1f25; font-weight: 600; font-size: 14px; border-radius: 4px 4px 0 0; padding: 2px 17px 0 15px; }
.active::after { display: none; }
.active svg { color: #666; }
.more { width: 49px; height: 24px; position: relative; }
.addt { width: 48px; height: 24px; }
.side-tabs { width: 189px; background: #5a427e; border-radius: 6px 0 0 0; display: flex; align-items: center; justify-content: space-between; padding: 0 18px 0 15px; }
.side-tabs button { gap: 5px; }
.float { position: absolute; right: 0; top: 21px; width: 50px; height: 57px; border-radius: 8px 0 0 8px; background: #3a3734; color: #e6f213; box-shadow: 0 2px 10px #0004; padding-right: 2px; }

/* view bar */
.viewbar { height: 54px; border-bottom: 1px solid #d9dbdd; display: flex; align-items: center; padding: 0 57px 1px 14px; }
.views { width: 84px; height: 32px; border-radius: 4px; background: #f0f0f0; gap: 6px; font-weight: 600; font-size: 14px; }
.viewbar .bar { width: 1px; height: 20px; background: #c8c8c8; margin: 0 25px 0 14px; }
.gridview { width: 150px; justify-content: space-between; font-weight: 600; }
.tool { gap: 5px; justify-content: flex-start; }
.t1 { margin-left: 31px; width: 126px; }
.t2 { width: 87px; }
.t3 { width: 97px; }
.t4 { width: 79px; gap: 6px; }
.t5 { width: 91px; gap: 4px; }
.t6 { width: 48px; }
.t7 { gap: 6px; }
.aif { margin-left: auto; gap: 5px; }

/* sidebar */
.work { flex: 1; display: flex; min-height: 0; }
.sidebar { width: 338px; border-right: 1px solid #c4c7cc; display: flex; flex-direction: column; }
.find { height: 52px; margin: 0 19px; border-bottom: 1px solid #e0e0e0; display: flex; align-items: center; gap: 10px; padding: 7px 17px 0 13px; color: #555960; }
.find input { flex: 1; }
.find input::placeholder { color: #757575; opacity: 1; }
.vrow { margin: 10px 14px 0; height: 38px; border-radius: 4px; background: #d4f0fe; display: flex; align-items: center; gap: 10px; padding: 0 16px 0 10px; font-weight: 600; }
.vcheck { margin-left: auto; color: #555960; }
.create { margin: auto 19px 9px; border-top: 1px solid #e0e0e0; padding-top: 8px; }
.chead { width: 100%; height: 46px; justify-content: space-between; padding: 0 13px 0 14px; font-weight: 600; margin-bottom: 4px; }
.crow { width: 100%; height: 38px; justify-content: flex-start; gap: 10px; padding: 0 17px 0 15px; font-weight: 600; font-size: 14px; }
.crow > svg:first-child { width: 18px; overflow: visible; }
.plus { margin-left: auto; color: #4a4d54; }
.team { height: 22px; border-radius: 11px; background: #c4ecff; color: #0b67a8; font-weight: 400; font-size: 13px; line-height: 22px; padding: 0 9px; }
.section { height: 40px; }
.form { border-top: 1px solid #e0e0e0; height: 60px; margin-top: 12px; }

/* grid */
.gridpane { flex: 1; min-width: 0; overflow: hidden; display: flex; flex-direction: column; position: relative; background: #f2f3f7; }
table { border-collapse: separate; border-spacing: 0; table-layout: fixed; width: 1591px; height: 267px; background: #fff; }
.c-num { width: 79px; }
.c { width: 216px; }
th { background: #f4f4f4; font-weight: 400; text-align: left; }
th, td { height: 38px; padding: 0 6px; border-right: 1px solid #dde0e4; border-bottom: 1px solid #dde0e4; overflow: hidden; white-space: nowrap; text-overflow: ellipsis; }
th { border-bottom-color: #cfd0d3; }
th.num, td.num { border-right: 0; padding: 0 0 0 14px; color: #666b73; font-size: 13px; }
td.num { padding-left: 16px; }
.frozen { border-right-color: #c4c7cc; padding-left: 9px; }
th.frozen { padding-left: 8px; }
td.mail { padding-right: 0; padding-left: 7px; }
.h { display: flex; align-items: center; gap: 6px; height: 36px; }
.h svg { color: #70747c; }
.h svg:first-child { margin-top: -2px; }
.hc { margin: -4px 3px 0 auto; }
td a { text-decoration: underline; text-underline-offset: 2px; }
.tag { display: inline-block; height: 22px; line-height: 21px; border-radius: 11px; background: #d0e0fd; padding: 0 9px; margin-left: 2px; vertical-align: middle; }
.cyan { background: #c0eeff; }
.rate { padding-left: 9px; font-size: 0; }
.rate svg { display: inline-block; width: 18px; height: 18px; margin-right: 1px; color: #ffba05; vertical-align: middle; }
.rate .no { color: #dde1e9; }
.hover td { background: #f8f8f8; }
.hover td.num { padding: 0 0 0 3px; }
.box { appearance: none; display: block; width: 13px; height: 13px; border: 1px solid #dcdcdc; border-radius: 2px; background: #fff; }
.rowctl { display: flex; align-items: center; gap: 3px; height: 36px; overflow: hidden; }
.expand { color: #166ee1; margin-left: 25px; }
.fu input { appearance: none; display: block; width: 18px; height: 16px; margin: 0 auto; }
.fu input:checked { background: #048a0e; clip-path: polygon(0 55%, 13% 42%, 36% 68%, 88% 0, 100% 12%, 37% 100%); }
.hover .fu input { width: 26px; height: 26px; border: 2px solid #e2e2e2; border-radius: 4px; background: #fff; }
.addrow button { margin-left: -2px; color: #4a4d54; }
.filler { flex: 1; }
.fleft { width: 295px; height: 100%; background: #f8f8f8; border-right: 1px solid #c4c7cc; }
.addpill { position: absolute; z-index: 1; left: 10px; bottom: 33px; height: 44px; width: 158px; border: 1px solid #e2e3e6; border-radius: 22px; background: #fff; display: flex; overflow: hidden; }
.addpill button:first-child { width: 54px; padding-left: 2px; border-right: 1px solid #e2e3e6; }
.addmore { flex: 1; gap: 9px; padding-right: 2px; }
.summary { height: 40px; background: #f9fafc; border-top: 1px solid #dde0e4; display: flex; font-size: 12px; position: relative; }
.sleft { width: 295px; border-right: 1px solid #c4c7cc; padding: 6px 10px; }
.sum { width: 648px; text-align: right; padding: 5px 8px; color: #666b73; }
.sum b { font-weight: 400; font-size: 14px; color: #1d1f25; margin-left: 2px; }
.scroll { position: absolute; left: 4px; right: 0; bottom: 2px; height: 10px; border-radius: 5px; background: #b3b3b5; }
.getting { position: absolute; z-index: 1; right: 86px; bottom: 0; width: 480px; height: 39px; background: #31353e; color: #fff; border-radius: 6px 6px 0 0; justify-content: space-between; padding: 2px 23px 0 19px; box-shadow: 0 0 16px #0004; }

/* taskbar */
.taskbar { height: 72px; background: linear-gradient(90deg, #202020 20%, #1f1e28 50%, #1f1f22 80%, #202020); color: #fff; display: flex; align-items: center; padding-top: 2px; position: relative; z-index: 2; }
.widgets { margin-left: 24px; width: 36px; }
.apps { display: flex; align-items: center; margin-left: 316px; }
.start { margin-right: 21px; }
.search { width: 328px; height: 48px; border-radius: 24px; background: #39393c; border: 1px solid #444447; display: flex; align-items: center; padding: 0 5px 0 16px; gap: 14px; margin-right: 4px; font-size: 20px; overflow: hidden; }
.search input { flex: 1; line-height: 28px; }
.search input::placeholder { color: #cfcfcf; opacity: 1; }
.app { width: 60px; height: 60px; margin: 0 3px; position: relative; border-radius: 6px; }
.av { position: absolute; right: 5px; top: 5px; width: 24px; height: 24px; border-radius: 50%; background: #5561b5; color: #dfe3ff; font-size: 12px; font-weight: 700; line-height: 24px; }
.green { background: #084c43; color: #b8dcd4; }
.focus { background: #2d2c33; border: 1px solid #38373d; }
.run::after, .focus::after { content: ""; position: absolute; bottom: 1px; width: 9px; height: 5px; border-radius: 3px; background: #9b9b9b; }
.focus::after { width: 24px; bottom: 0; background: #4cc2ff; }
.unread { position: absolute; left: 23px; top: 5px; width: 42px; height: 24px; border-radius: 12px; background: #4cc2ff; color: #111; font-size: 16px; line-height: 24px; z-index: 1; }
.tray { margin-left: auto; padding-right: 27px; display: flex; align-items: center; font-size: 17px; }
.sync { margin: 0 21px 0 13px; }
.lang { width: 34px; }
.net { gap: 10px; margin-left: 27px; }
.clock { display: flex; flex-direction: column; text-align: right; line-height: 23px; width: 98px; }
.notif { width: 30px; height: 24px; border-radius: 12px; background: #4cc2ff; color: #111; font-size: 15px; line-height: 24px; text-align: center; margin-left: 8px; }
```
